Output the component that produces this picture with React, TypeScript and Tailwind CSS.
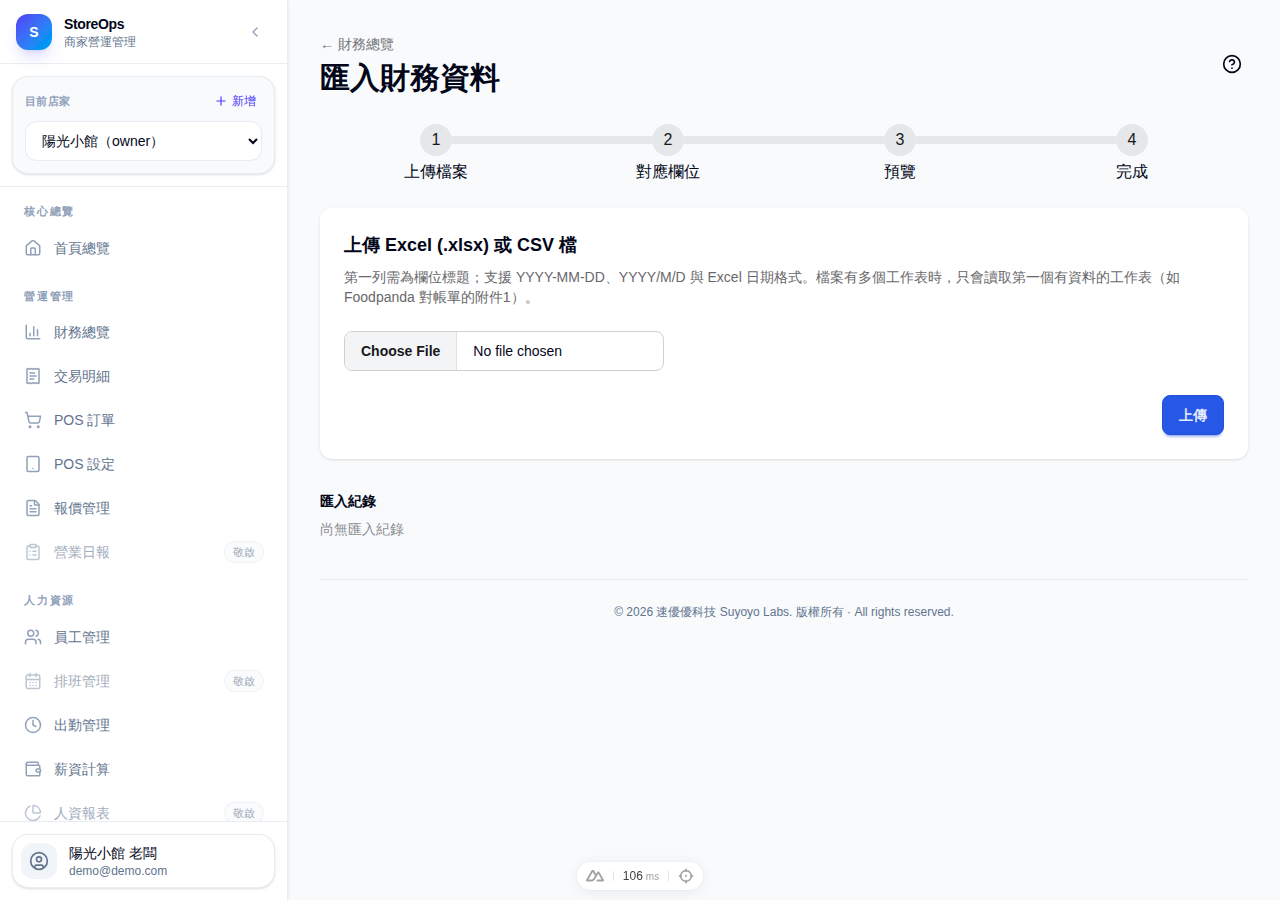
import React from 'react'
import {
  CalendarDays,
  ChartColumn,
  ChartPie,
  ChevronLeft,
  CircleQuestionMark,
  CircleUser,
  ClipboardList,
  Clock,
  FileText,
  House,
  Plus,
  ReceiptText,
  ShoppingCart,
  Tablet,
  Users,
  Wallet,
  type LucideIcon,
} from 'lucide-react'

interface NavItem {
  label: string
  icon: LucideIcon
  soon?: boolean
}

interface NavGroup {
  title: string
  items: NavItem[]
}

const navGroups: NavGroup[] = [
  {
    title: '核心總覽',
    items: [{ label: '首頁總覽', icon: House }],
  },
  {
    title: '營運管理',
    items: [
      { label: '財務總覽', icon: ChartColumn },
      { label: '交易明細', icon: ReceiptText },
      { label: 'POS 訂單', icon: ShoppingCart },
      { label: 'POS 設定', icon: Tablet },
      { label: '報價管理', icon: FileText },
      { label: '營業日報', icon: ClipboardList, soon: true },
    ],
  },
  {
    title: '人力資源',
    items: [
      { label: '員工管理', icon: Users },
      { label: '排班管理', icon: CalendarDays, soon: true },
      { label: '出勤管理', icon: Clock },
      { label: '薪資計算', icon: Wallet },
      { label: '人資報表', icon: ChartPie, soon: true },
    ],
  },
]

const steps = ['上傳檔案', '對應欄位', '預覽', '完成']

const SidebarLink: React.FC<{ item: NavItem }> = ({ item }) => {
  const Icon = item.icon
  const content = (
    <>
      <Icon className="size-[18px] shrink-0 text-slate-400" strokeWidth={2} aria-hidden="true" />
      <span className="flex-1 truncate">{item.label}</span>
    </>
  )

  if (item.soon) {
    return (
      <span
        aria-disabled="true"
        className="flex h-10 items-center gap-3 rounded-xl px-3 text-sm text-slate-500 opacity-60"
      >
        {content}
        <span className="rounded-full border border-slate-200/80 bg-slate-100/60 px-2 py-0.5 text-[11px] leading-4">
          敬啟
        </span>
      </span>
    )
  }

  return (
    <a
      href="#"
      className="flex h-10 items-center gap-3 rounded-xl px-3 text-sm text-slate-500 transition hover:bg-slate-50"
    >
      {content}
    </a>
  )
}

const Sidebar: React.FC = () => (
  <aside className="sticky top-0 flex h-screen w-72 shrink-0 flex-col border-r border-slate-200/80 bg-white shadow-sm">
    <div className="flex h-16 shrink-0 items-center gap-3 border-b border-slate-200/80 px-4">
      <div className="flex size-9 items-center justify-center rounded-xl bg-linear-to-br from-indigo-600 to-sky-500 text-sm font-bold text-white shadow-lg shadow-indigo-500/20">
        S
      </div>
      <div className="flex-1">
        <div className="text-sm font-semibold tracking-tight">StoreOps</div>
        <div className="text-xs text-slate-500">商家營運管理</div>
      </div>
      <button
        type="button"
        aria-label="收合側邊欄"
        className="flex size-8 items-center justify-center rounded-lg text-slate-400 hover:bg-slate-100"
      >
        <ChevronLeft className="size-4" />
      </button>
    </div>

    {/* Store switcher */}
    <div className="shrink-0 border-b border-slate-200/80 p-3">
      <div className="rounded-2xl border border-slate-200/80 bg-slate-50 p-3 shadow-sm">
        <div className="mb-2 flex items-center justify-between">
          <label htmlFor="store" className="text-[11px] font-semibold tracking-wide text-slate-400">
            目前店家
          </label>
          <button
            type="button"
            className="flex h-6 items-center gap-1 rounded-lg px-1.5 text-xs text-indigo-600"
          >
            <Plus className="size-3.5" />
            新增
          </button>
        </div>
        <select
          id="store"
          className="h-10 w-full rounded-xl border border-slate-200/80 bg-white px-3 text-sm"
        >
          <option>陽光小館（owner）</option>
        </select>
      </div>
    </div>

    <nav className="flex min-h-0 flex-1 flex-col gap-5 overflow-hidden py-4 pr-[11px] pl-3">
      {navGroups.map((group) => (
        <div key={group.title} className="shrink-0">
          <h2 className="mb-2 px-3 text-[11px] leading-normal font-semibold tracking-[0.16em] text-slate-400">
            {group.title}
          </h2>
          <ul className="space-y-1">
            {group.items.map((item) => (
              <li key={item.label}>
                <SidebarLink item={item} />
              </li>
            ))}
          </ul>
        </div>
      ))}
    </nav>

    {/* Account */}
    <div className="shrink-0 border-t border-slate-200/80 p-3">
      <button
        type="button"
        className="flex w-full items-center gap-3 rounded-2xl border border-slate-200/80 bg-white p-2 text-left shadow-sm"
      >
        <span className="flex size-9 items-center justify-center rounded-xl bg-slate-100 text-slate-500">
          <CircleUser className="size-5" />
        </span>
        <span>
          <span className="block text-sm leading-5">陽光小館 老闆</span>
          <span className="block text-xs leading-4 text-slate-500">demo@demo.com</span>
        </span>
      </button>
    </div>
  </aside>
)

const Steps: React.FC = () => (
  <ol className="my-6 grid grid-cols-4">
    {steps.map((step, i) => (
      <li key={step} className="group flex flex-col items-center">
        <div className="flex h-10 w-full items-center">
          <span className="h-2 flex-1 bg-[#e6e7ea] group-first:invisible" />
          <span className="flex size-8 items-center justify-center rounded-full bg-[#e6e7ea] text-[#18181b]">
            {i + 1}
          </span>
          <span className="h-2 flex-1 bg-[#e6e7ea] group-last:invisible" />
        </div>
        <span>{step}</span>
      </li>
    ))}
  </ol>
)

const DevtoolsPill: React.FC = () => (
  <div className="fixed inset-x-0 bottom-[10px] mx-auto flex h-7 w-[126px] items-center rounded-full bg-white text-[#a3a3a3] shadow-[0_0_0_1px_rgba(0,0,0,0.02),0_2px_14px_rgba(0,0,0,0.07)]">
    <button type="button" aria-label="Toggle devtools" className="flex h-7 w-9 items-center justify-center">
      <svg viewBox="0 0 324 207" fill="currentColor" className="w-[18px]" aria-hidden="true">
        <path d="M181.767 206.675H302.288C306.116 206.675 309.877 205.68 313.192 203.79C316.506 201.9 319.259 199.182 321.172 195.909C323.084 192.635 324.09 188.922 324.088 185.143C324.086 181.363 323.076 177.651 321.16 174.38L240.221 36.015C238.308 32.743 235.557 30.025 232.242 28.136C228.928 26.247 225.169 25.252 221.342 25.252C217.515 25.252 213.756 26.247 210.442 28.136C207.127 30.025 204.376 32.743 202.463 36.015L181.767 71.418L141.304 2.189C139.39 -1.083 136.637 -3.8 133.322 -5.688C130.007 -7.577 126.247 -8.571 122.419 -8.571C118.592 -8.571 114.832 -7.577 111.517 -5.688C108.202 -3.8 105.449 -1.083 103.535 2.189L2.816 174.38C0.9 177.651 -0.11 181.363 -0.112 185.143C-0.114 188.922 0.892 192.635 2.804 195.909C4.717 199.182 7.47 201.9 10.784 203.79C14.099 205.68 17.86 206.675 21.688 206.675H97.342C127.317 206.675 149.423 193.443 164.634 167.627L201.563 103.35L221.342 68.953L280.706 172.225H201.563L181.767 206.675ZM96.107 172.19L43.31 172.178L122.454 34.438L161.943 103.35L135.503 149.384C125.401 166.126 113.924 172.19 96.107 172.19Z" />
      </svg>
    </button>
    <span className="h-2.5 w-px bg-neutral-200" />
    <span className="flex flex-1 items-baseline justify-center gap-[3px] text-xs text-[#404040]">
      106
      <span className="text-[10px] text-neutral-400">ms</span>
    </span>
    <span className="h-2.5 w-px bg-neutral-200" />
    <button type="button" aria-label="Inspect component" className="flex h-7 w-[34px] items-center justify-center">
      <svg
        viewBox="0 0 24 24"
        fill="none"
        stroke="currentColor"
        strokeWidth="2.5"
        strokeLinecap="round"
        className="size-4"
        aria-hidden="true"
      >
        <circle cx="12" cy="12" r="8" />
        <circle cx="12" cy="12" r="0.5" />
        <path d="M12 2v3M12 19v3M2 12h3M19 12h3" />
      </svg>
    </button>
  </div>
)

export default function App() {
  return (
    <div className="flex min-h-screen bg-slate-50 font-['Liberation_Sans',sans-serif] text-slate-950">
      <Sidebar />
      <main className="min-w-0 flex-1 p-8">
        <header className="flex items-center justify-between">
          <div>
            <div className="leading-6">
              <a href="#" className="text-sm text-[#737378] hover:underline">
                ← 財務總覽
              </a>
            </div>
            <h1 className="mt-1 text-3xl leading-9 font-bold">匯入財務資料</h1>
          </div>
          <button type="button" aria-label="說明" className="flex size-8 items-center justify-center rounded-full">
            <CircleQuestionMark className="size-5" />
          </button>
        </header>

        <Steps />

        <section className="rounded-xl bg-white p-6 shadow-sm">
          <h2 className="text-lg leading-[27px] font-semibold">上傳 Excel (.xlsx) 或 CSV 檔</h2>
          <p className="mt-2 text-sm leading-5 text-[#68686c]">
            第一列需為欄位標題；支援 YYYY-MM-DD、YYYY/M/D 與 Excel
            日期格式。檔案有多個工作表時，只會讀取第一個有資料的工作表（如 Foodpanda 對帳單的附件1）。
          </p>
          <input
            type="file"
            aria-label="選擇檔案"
            className="mt-6 block h-10 w-full max-w-80 overflow-hidden rounded-lg border border-[#d0d0d1] bg-white text-sm leading-[38px] file:mr-4 file:h-[38px] file:border-r file:border-solid file:border-[#e0e1e3] file:bg-[#f3f4f6] file:px-4 file:text-sm file:font-semibold file:text-[#18181b]"
          />
          <div className="mt-6 flex justify-end">
            <button
              type="button"
              className="h-10 rounded-lg border border-[#2350d4] bg-[#2757e7] px-4 text-sm font-semibold text-[#e5ebff] shadow-[0_3px_2px_-2px_rgba(39,87,231,0.3),0_4px_3px_-2px_rgba(39,87,231,0.3)]"
            >
              上傳
            </button>
          </div>
        </section>

        <section className="mt-8">
          <h2 className="text-sm leading-5 font-semibold">匯入紀錄</h2>
          <p className="mt-2 text-sm leading-5 text-[#8e8e92]">尚無匯入紀錄</p>
        </section>

        <footer className="mt-10 border-t border-slate-200/80 pt-6 text-center text-xs text-slate-500">
          © 2026 速優優科技 Suyoyo Labs. 版權所有 · All rights reserved.
        </footer>
      </main>
      <DevtoolsPill />
    </div>
  )
}
